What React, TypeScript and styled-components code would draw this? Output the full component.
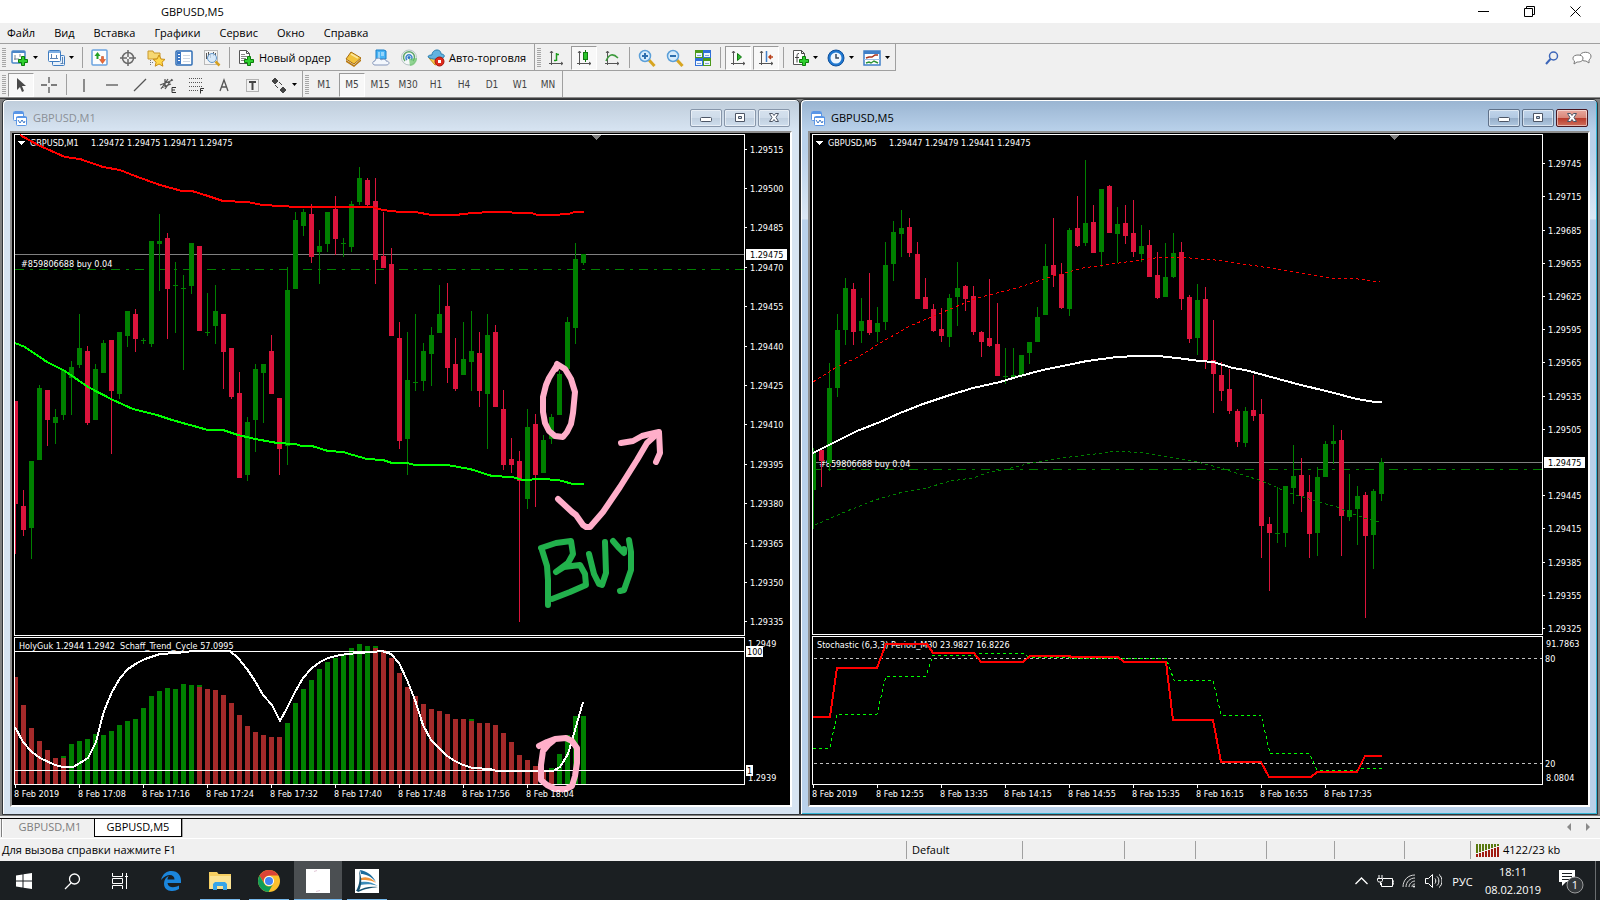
import React from "react";
import styled, { createGlobalStyle, css } from "styled-components";

const UI_FONT = '"Open Sans", "Noto Sans", sans-serif';
const CHART_FONT = '"DejaVu Sans Condensed", "DejaVu Sans", sans-serif';

const Global = createGlobalStyle`
  *, *::before, *::after { box-sizing: border-box; }
  body { margin: 0; background: #f0f0f0; font-family: ${UI_FONT}; font-size: 11px; color: #000; }
  button { font: inherit; color: inherit; margin: 0; padding: 0; border: 0; background: none; }
  svg { display: block; flex: none; }
`;

/* ---------- shell ---------- */

const Shell = styled.div`
  display: flex;
  flex-direction: column;
  min-height: 100vh;
  min-width: 1000px;
`;

const TitleBar = styled.header`
  display: flex;
  align-items: center;
  height: 23px;
  padding: 0 2px 0 161px;
  background: #fff;
  line-height: 16px;
`;

const CaptionButtons = styled.div`
  display: flex;
  margin-left: auto;
`;

const CaptionButton = styled.button`
  display: grid;
  place-items: center;
  width: 46px;
  height: 22px;
`;

const MenuBar = styled.nav`
  display: flex;
  align-items: center;
  gap: 19px;
  height: 21px;
  padding: 0 7px;
  border-bottom: 1px solid #a0a0a0;
`;

const MenuItem = styled.button`
  line-height: 18px;
`;

const Toolbars = styled.div`
  display: flex;
  justify-content: space-between;
  padding-right: 7px;
`;

const Strip = styled.div<{ $underlined?: boolean }>`
  display: flex;
  width: max-content;
  height: ${(p) => (p.$underlined ? 27 : 26)}px;
  ${(p) => p.$underlined && css`border-bottom: 1px solid #a0a0a0;`}
`;

const Section = styled.div`
  display: flex;
  align-items: center;
  padding-top: 1px;
  border-right: 1px solid #a0a0a0;
`;

const Grip = styled.span`
  width: 4px;
  height: 20px;
  margin: 0 1px 0 2px;
  background: repeating-linear-gradient(#a6a6a6 0 1px, #f0f0f0 1px 2px);
`;

const Rule = styled.span`
  width: 1px;
  height: 21px;
  margin: 0 3px;
  background: #a0a0a0;
`;

const ToolButton = styled.button<{ $pressed?: boolean; $menu?: boolean; $label?: boolean }>`
  display: flex;
  align-items: center;
  justify-content: ${(p) => (p.$menu || p.$label ? "flex-start" : "center")};
  gap: ${(p) => (p.$label ? 4 : 3)}px;
  width: ${(p) => (p.$label ? "auto" : p.$menu ? "34px" : "26px")};
  height: 24px;
  margin: 0 1px;
  padding: 0 ${(p) => (p.$label ? 6 : 0)}px 0 ${(p) => (p.$menu || p.$label ? 2 : 0)}px;
  line-height: 16px;
  white-space: nowrap;
  border: 1px solid transparent;
  ${(p) =>
    p.$pressed &&
    css`
      border-color: #9a9a9a #fff #fff #9a9a9a;
      background: #f8f8f8;
    `}
`;

const PeriodButton = styled(ToolButton)`
  font-family: ${CHART_FONT};
  font-size: 10px;
  color: #444;
`;

const Corner = styled.div`
  display: flex;
  align-items: center;
  gap: 8px;
  height: 27px;
`;

const PlainButton = styled.button`
  display: grid;
  place-items: center;
  width: 22px;
  height: 22px;
`;

/* ---------- documents ---------- */

const Documents = styled.main`
  display: flex;
  flex: 1;
  min-height: 718px;
  padding: 0 2px;
  border-top: 1px solid #8c8c8c;
  background: #808080;
  box-shadow: inset 0 1px 0 #3c3c3c, inset 0 -2px 0 #f0f0f0;
`;

const DocWindow = styled.section<{ $active?: boolean }>`
  display: flex;
  flex: 1 1 0;
  flex-direction: column;
  min-width: 0;
  margin: 1px 0 3px;
  padding: 0 7px 7px;
  border: 1px solid #303438;
  border-radius: 5px 5px 0 0;
  background: ${(p) =>
    p.$active
      ? "linear-gradient(#99b4d1 0, #b9d1ea 31px, #b9d1ea 50px, #dbe7f4 119px, #b9d1ea 120px)"
      : "linear-gradient(#bfcddb 0, #d7e4f2 31px)"};
  box-shadow: inset 1px 1px 0 #fff${(p) => (p.$active ? ", inset -1px -1px 0 #35b6d6" : "")};
`;

const DocTitle = styled.div<{ $active?: boolean }>`
  display: flex;
  align-items: center;
  gap: 6px;
  height: 31px;
  padding: 5px 0 0 3px;
  line-height: 16px;
  color: ${(p) => (p.$active ? "#000" : "#8a8f96")};
`;

const DocButtons = styled.div`
  display: flex;
  gap: 2px;
  margin: 0 2px 0 auto;
`;

const DocButton = styled.button<{ $tone: "idle" | "active" | "close" }>`
  display: grid;
  place-items: center;
  width: 32px;
  height: 18px;
  border: 1px solid ${(p) => (p.$tone === "close" ? "#4a1620" : p.$tone === "active" ? "#5f7189" : "#8796aa")};
  border-radius: 2px;
  box-shadow: inset 0 0 0 1px rgba(255, 255, 255, 0.5);
  background: ${(p) =>
    p.$tone === "close"
      ? "linear-gradient(#e9a99f 0, #d88678 49%, #b8392a 50%, #cf6f5c)"
      : p.$tone === "active"
        ? "linear-gradient(#c0d4ea 0, #b2c9e2 49%, #95adc8 50%, #b0c8e0)"
        : "linear-gradient(#d5e1ee 0, #cfdcea 49%, #c0cfdf 50%, #cfdeed)"};
`;

const ChartWell = styled.div`
  flex: 1;
  min-height: 0;
  overflow: hidden;
  border: 2px solid;
  border-color: #8e8e8e #fff #fff #8e8e8e;
  background: #000;
`;

const ChartCanvas = styled.svg`
  width: 100%;
  height: 672px;
  font-family: ${CHART_FONT};
  font-size: 9px;
`;

const Frame = styled.rect`
  width: calc(100% - 48px);
  fill: none;
  stroke: #fff;
  stroke-width: 1px;
`;

const Level = styled.rect`
  width: calc(100% - 49px);
  height: 1px;
`;

const Note = styled.text`
  fill: #fff;
  white-space: pre;
`;

/* ---------- bottom bars ---------- */

const TabStrip = styled.div`
  display: flex;
  align-items: flex-start;
  height: 21px;
  padding-left: 1px;
  border-top: 1px solid #000;
  border-bottom: 1px solid #fff;
`;

const Tab = styled.button<{ $active?: boolean }>`
  height: 18px;
  width: ${(p) => (p.$active ? 88 : 93)}px;
  padding: ${(p) => (p.$active ? "0 0 1px" : "0 0 2px 4px")};
  line-height: 14px;
  color: ${(p) => (p.$active ? "#000" : "#7d7d7d")};
  ${(p) =>
    p.$active
      ? css`
          background: #fff;
          border: 1px solid #000;
          border-top: 0;
          box-shadow: 1px 0 0 #a0a0a0;
        `
      : css`
          border-left: 1px solid #808080;
          box-shadow: inset 1px 0 0 #fff;
        `}
`;

const TabArrows = styled.div`
  display: flex;
  align-items: center;
  gap: 3px;
  height: 16px;
  margin: 0 4px 0 auto;
`;

const ArrowButton = styled.button`
  display: grid;
  place-items: center;
  width: 16px;
  height: 16px;
`;

const StatusBar = styled.footer`
  display: flex;
  align-items: center;
  height: 22px;
  line-height: 16px;
`;

const StatusCell = styled.span<{ $w?: number }>`
  display: flex;
  align-items: center;
  gap: 4px;
  height: 18px;
  ${(p) => (p.$w ? `width: ${p.$w}px;` : "flex: 1;")}
  padding-left: ${(p) => (p.$w ? 5 : 2)}px;
  ${(p) => p.$w && css`border-left: 1px solid #a0a0a0;`}
`;

const Taskbar = styled.div`
  display: flex;
  height: 40px;
  background: #1b1f22;
  color: #fff;
`;

const TaskGroup = styled.div<{ $gap?: number; $inset?: number }>`
  display: flex;
  gap: ${(p) => p.$gap ?? 0}px;
  margin-left: ${(p) => p.$inset ?? 0}px;
`;

const TaskButton = styled.button<{ $running?: boolean; $active?: boolean }>`
  display: grid;
  place-items: center;
  position: relative;
  width: 48px;
  height: 40px;
  background: ${(p) => (p.$active ? "#4b4f52" : "none")};
  ${(p) =>
    p.$running &&
    css`
      &::after {
        content: "";
        position: absolute;
        left: ${p.$active ? 0 : 4}px;
        right: ${p.$active ? 0 : 4}px;
        bottom: 0;
        height: 2px;
        background: #76b9ed;
      }
    `}
`;

const Tray = styled.div`
  display: flex;
  align-items: center;
  margin-left: auto;
`;

const TrayButton = styled.button<{ $w?: number }>`
  display: grid;
  place-items: center;
  width: ${(p) => p.$w ?? 24}px;
  height: 40px;
`;

const Clock = styled.button`
  width: 66px;
  height: 40px;
  line-height: 18px;
  text-align: center;
`;

const ShowDesktop = styled.button`
  width: 5px;
  height: 40px;
  border-left: 1px solid #6a6d6f;
`;

/* ---------- small drawings ---------- */

type Children = { children?: React.ReactNode };

const Pic = ({ w = 18, h = 18, children }: Children & { w?: number; h?: number }) => (
  <svg width={w} height={h} viewBox={`0 0 ${w} ${h}`} fill="none" aria-hidden="true">
    {children}
  </svg>
);

const Caret = () => (
  <Pic w={7} h={4}>
    <path d="M1 0h5L3.500 3z" fill="#000" />
  </Pic>
);

const Plus = ({ x, y }: { x: number; y: number }) => (
  <path
    transform={`translate(${x} ${y})`}
    d="M3.500.5h3v3h3v3h-3v3h-3v-3h-3v-3h3z"
    fill="#2fd02f"
    stroke="#0b7d0b"
  />
);

const NewChartIcon = () => (
  <Pic>
    <rect x="1" y="2" width="13" height="12" rx="1" fill="#fff" stroke="#4a86c8" strokeWidth="1.500" />
    <path d="M1 3h13" stroke="#4a86c8" strokeWidth="2" />
    <path d="M4 6v5M3 10h5M9 5v3" stroke="#7d8894" />
    <Plus x={7} y={7} />
  </Pic>
);

const ProfilesIcon = () => (
  <Pic>
    <rect x="5.500" y="6.500" width="12" height="10" rx="1" fill="#e8f1fb" stroke="#3f7cc0" />
    <rect x="1.500" y="1.500" width="12" height="11" rx="1" fill="#fff" stroke="#3f7cc0" />
    <path d="M2 3h11" stroke="#7fb0e4" strokeWidth="2" />
    <path d="M4.500 5v5M3 9.500h8M9.500 6v3M13.500 14.500h3M15.500 8v6" stroke="#5b84b4" />
  </Pic>
);

const MarketWatchIcon = () => (
  <Pic>
    <rect x="1" y="1" width="15" height="15" rx="1" fill="#fdfdfd" stroke="#6aa3df" strokeWidth="1.500" />
    <path d="M6.500 3l3 4h-2v3h-2V7h-2z" fill="#26a226" />
    <path d="M11.500 14.500l-3-4h2V7.500h2v3h2z" fill="#ec6a38" stroke="#b43c12" strokeWidth=".5" />
  </Pic>
);

const CrosshairIcon = () => (
  <Pic>
    <circle cx="9" cy="9" r="5.500" stroke="#6a6a6a" strokeWidth="1.500" />
    <path d="M9 1v7M9 10v7M1 9h7M10 9h7" stroke="#6a6a6a" strokeWidth="1.500" />
  </Pic>
);

const NavigatorIcon = () => (
  <Pic>
    <path d="M1 2h5l1 2h6v6H1z" fill="#f7d872" stroke="#c9982c" />
    <path d="M3.500 11v6M3 13.500h3" stroke="#777" strokeDasharray="1 1" />
    <path d="M12 6l2 4 4 .4-3 2.800.9 4L12 15l-3.800 2.200.9-4-3-2.800 4-.4z" fill="#ffd84a" stroke="#c98d14" />
  </Pic>
);

const TerminalIcon = () => (
  <Pic>
    <rect x="1" y="2" width="16" height="14" rx="1" fill="#fff" stroke="#2f6db5" strokeWidth="1.500" />
    <rect x="2" y="3" width="4" height="12" fill="#3b77c4" />
    <path d="M8 6.500h7M8 9.500h7M8 12.500h7" stroke="#cfd8e4" />
    <path d="M3 5.500h2M3 8.500h2M3 11.500h2" stroke="#fff" />
  </Pic>
);

const TesterIcon = () => (
  <Pic>
    <rect x="1.500" y="1.500" width="13" height="14" fill="#f4f4f4" stroke="#b9b9b9" />
    <path d="M3.500 4v6M5.500 3v5M7.500 5v4M10.500 3v4M12.500 4v3" stroke="#555" />
    <circle cx="9" cy="9" r="4.500" fill="#cfe6fb" fillOpacity=".8" stroke="#6598cb" />
    <path d="M12.500 12.500l4 4" stroke="#d5a021" strokeWidth="2.500" />
  </Pic>
);

const NewOrderIcon = () => (
  <Pic>
    <path d="M2.500 1.500h7l3 3v10h-10z" fill="#fff" stroke="#555" />
    <path d="M9.500 1.500v3h3" stroke="#555" />
    <path d="M4 5.500h4M4 7.500h6M4 9.500h5M4 11.500h4" stroke="#888" />
    <Plus x={7} y={7} />
  </Pic>
);

const BookIcon = () => (
  <Pic>
    <path d="M2 11l8 5 7-6v2l-7 6-8-5z" fill="#b87912" />
    <path d="M7 3l10 6-7 6-8-5z" fill="#f2c23c" stroke="#a86d10" />
    <path d="M7 5l7 4" stroke="#fbe79a" strokeWidth="2" />
  </Pic>
);

const VpsIcon = () => (
  <Pic>
    <path d="M4 1h8l2 1v8H4z" fill="#48b4f5" stroke="#1a7ec7" />
    <path d="M7 3v7M9 4h3M9 6h3" stroke="#e2f5ff" />
    <path d="M3 16c-3 0-3-4 0-4 0-3 5-4 6-1 3-2 5 0 5 1 4 0 4 4 0 4z" fill="#f3f7fd" stroke="#8496bb" />
  </Pic>
);

const SignalsIcon = () => (
  <Pic>
    <circle cx="9" cy="8.500" r="7.500" fill="#f5f7f8" stroke="#b4c4c4" />
    <path d="M5 12a5.500 5.500 0 1 1 8 0" stroke="#5da568" strokeWidth="1.500" />
    <path d="M7 11a3 3 0 1 1 4 0" stroke="#3d86cf" strokeWidth="1.500" />
    <circle cx="9" cy="8.500" r="1.500" fill="#2d72c4" />
    <path d="M9 10l1 7c4 0 7-4 7-8" fill="#66c466" fillOpacity=".7" />
  </Pic>
);

const AutoIcon = () => (
  <Pic>
    <path d="M2 9l6 7 7-3V8z" fill="#f7c948" stroke="#c7911b" />
    <path d="M1 8c0-2 3-2 4-2 0-6 9-7 9-1 2 0 4 1 3 3-4 3-12 3-16 0z" fill="#62b3e0" stroke="#2b7eae" />
    <circle cx="12.500" cy="12.500" r="4.500" fill="#df2a1c" stroke="#a51409" />
    <rect x="11" y="11" width="3" height="3" fill="#fff" />
  </Pic>
);

const Axes = ({ children }: Children) => (
  <Pic>
    <path d="M4.500 2v14M2 14.500h14M3 4l1.500-2L6 4M14 13l2 1.500-2 1.500" stroke="#555" />
    {children}
  </Pic>
);

const ZoomIcon = ({ plus }: { plus?: boolean }) => (
  <Pic>
    <path d="M11 11l5.500 6" stroke="#d7a520" strokeWidth="3" />
    <circle cx="7" cy="7" r="5.500" fill="#d6ecfc" stroke="#5b9fd8" strokeWidth="1.500" />
    <path d={plus ? "M4 7h6M7 4v6" : "M4 7h6"} stroke="#2d6fae" strokeWidth="2" />
  </Pic>
);

const TileIcon = () => (
  <Pic>
    <path d="M1 1h8v8H1zM9 9h8v8H9z" fill="#4c9a1c" />
    <path d="M9 1h8v8H9zM1 9h8v8H1z" fill="#2f6fd8" />
    <path d="M2 4h6v4H2zM10 4h6v4h-6zM2 12h6v4H2zM10 12h6v4h-6z" fill="#eef6ff" />
    <path d="M3 6.500h4M11 6.500h4M3 14.500h4M11 14.500h4" stroke="#86a5cf" />
  </Pic>
);

const IndicatorsIcon = () => (
  <Pic>
    <path d="M2.500 1.500h8l3 3v11h-11z" fill="#fff" stroke="#555" />
    <path d="M10.500 1.500v3h3M8 4.500c-2 0-2 1-2 3v6M4 8.500h4" stroke="#444" />
    <Plus x={8} y={7} />
  </Pic>
);

const ClockIcon = () => (
  <Pic>
    <circle cx="9" cy="9" r="8" fill="#1f78d1" stroke="#0f4f9a" />
    <circle cx="9" cy="9" r="5.500" fill="#eef6fe" />
    <path d="M9 5v4h3" stroke="#3a4a5c" strokeWidth="1.500" />
  </Pic>
);

const TemplateIcon = () => (
  <Pic>
    <rect x="1" y="2" width="16" height="14" fill="#fff" stroke="#3f7fc8" strokeWidth="1.500" />
    <path d="M1 3.500h16" stroke="#3f7fc8" strokeWidth="3" />
    <path d="M3 9l3-1 3 0 3-2 3 0" stroke="#a8321c" strokeWidth="1.500" />
    <path d="M1 10.500h16" stroke="#9dbfe6" />
    <path d="M3 14l3-1 2 1 3-2 4 2" stroke="#2f9437" strokeWidth="1.500" />
  </Pic>
);

const Grey = ({ d, children }: Children & { d: string }) => (
  <Pic>
    <path d={d} stroke="#555" strokeWidth="1.300" />
    {children}
  </Pic>
);

const DocIcon = () => (
  <Pic w={14} h={15}>
    <rect x=".5" y=".5" width="10" height="9" rx="1" fill="#fff" stroke="#5a96e6" />
    <path d="M1 2h9" stroke="#5a96e6" strokeWidth="2" />
    <rect x="3.500" y="5.500" width="10" height="9" rx="1" fill="#fff" stroke="#5a96e6" />
    <path d="M3 6.500h11" stroke="#5a96e6" />
    <path d="M5 9l2 3 2-3 2 3 1-2" stroke="#3c78c8" />
  </Pic>
);

const glyphFill = "#fff";
const glyphLine = "#4d5666";

const DocMinIcon = () => (
  <Pic w={12} h={12}>
    <rect x=".5" y="5.500" width="11" height="4" rx="1" fill={glyphFill} stroke={glyphLine} />
  </Pic>
);
const DocMaxIcon = () => (
  <Pic w={12} h={10}>
    <path fillRule="evenodd" d="M1.500.5h9v8h-9zM4.500 3.500h3v2h-3z" fill={glyphFill} stroke={glyphLine} />
  </Pic>
);
const DocCloseIcon = () => (
  <Pic w={12} h={10}>
    <path d="M1.500.5h3L6 2.500 7.500.5h3L8 4.500l2.500 4h-3L6 6.500l-1.500 2h-3L4 4.500z" fill={glyphFill} stroke={glyphLine} />
  </Pic>
);

/* ---------- chart data ---------- */

// high, body top, body bottom, low, rising (1) or falling (0)
type Candle = [number, number, number, number, 0 | 1];
type Point = [number, number];

const m1Candles: Candle[] = [
  [401, 401, 504, 554, 0], [490, 506, 530, 536, 0], [461, 461, 528, 559, 1], [385, 388, 460, 460, 1],
  [390, 390, 420, 446, 0], [409, 417, 423, 444, 1], [370, 370, 415, 420, 1], [361, 367, 378, 415, 1],
  [314, 348, 365, 368, 1], [346, 351, 423, 425, 0], [364, 369, 420, 420, 1], [340, 343, 373, 373, 1],
  [340, 340, 391, 454, 0], [332, 332, 394, 399, 1], [311, 311, 336, 347, 1], [309, 314, 339, 352, 0],
  [338, 340, 341, 344, 1], [241, 241, 344, 347, 1], [214, 241, 244, 291, 1], [233, 238, 289, 339, 0],
  [262, 285, 286, 333, 1], [275, 288, 289, 370, 1], [243, 243, 286, 294, 1], [246, 246, 331, 331, 0],
  [293, 332, 333, 336, 1], [285, 311, 326, 344, 1], [314, 314, 352, 389, 0], [348, 348, 397, 399, 0],
  [372, 393, 478, 478, 0], [417, 422, 475, 481, 1], [364, 369, 420, 452, 1], [364, 364, 373, 423, 1],
  [335, 351, 394, 394, 0], [398, 398, 449, 475, 0], [267, 290, 446, 465, 1], [212, 220, 289, 289, 1],
  [209, 212, 226, 236, 1], [204, 214, 257, 263, 0], [230, 246, 252, 284, 1], [212, 212, 244, 252, 1],
  [196, 209, 239, 255, 0], [238, 243, 244, 257, 1], [201, 204, 247, 252, 1], [167, 178, 202, 205, 1],
  [178, 180, 205, 206, 0], [178, 201, 260, 284, 0], [212, 256, 268, 268, 0], [248, 264, 336, 336, 0],
  [322, 338, 441, 449, 0], [332, 380, 439, 475, 1], [314, 382, 383, 391, 1], [343, 351, 381, 391, 1],
  [327, 335, 354, 386, 1], [285, 314, 333, 333, 1], [283, 306, 368, 383, 0], [338, 364, 389, 391, 0],
  [322, 359, 375, 375, 1], [311, 351, 362, 391, 1], [332, 353, 391, 407, 0], [314, 335, 394, 449, 1],
  [325, 332, 407, 407, 0], [390, 409, 465, 470, 0], [438, 459, 465, 473, 0], [451, 461, 481, 622, 0],
  [409, 427, 499, 509, 1], [414, 424, 475, 507, 0], [435, 440, 473, 473, 1], [414, 417, 439, 444, 1],
  [371, 374, 415, 415, 1], [317, 322, 369, 378, 1], [243, 259, 328, 344, 1], [254, 254, 263, 265, 1],
];

const m5Candles: Candle[] = [
  [448, 453, 490, 529, 1], [450, 450, 461, 487, 0], [363, 388, 463, 471, 1], [314, 330, 388, 397, 1],
  [278, 288, 330, 345, 1], [283, 289, 332, 345, 0], [298, 321, 331, 343, 1], [273, 320, 333, 335, 0],
  [307, 323, 332, 342, 1], [242, 265, 322, 330, 1], [221, 232, 264, 281, 1], [210, 228, 234, 257, 1],
  [218, 227, 253, 257, 0], [242, 254, 299, 299, 0], [278, 297, 309, 309, 0], [304, 309, 331, 332, 0],
  [308, 329, 336, 342, 0], [294, 298, 337, 347, 1], [262, 288, 297, 326, 1], [285, 286, 299, 311, 0],
  [286, 296, 332, 335, 0], [331, 332, 342, 357, 0], [279, 338, 346, 347, 0], [303, 344, 376, 376, 0],
  [348, 376, 377, 384, 1], [348, 375, 377, 377, 1], [355, 355, 376, 378, 1], [342, 342, 353, 364, 1],
  [307, 317, 342, 342, 1], [244, 266, 315, 315, 1], [218, 265, 275, 287, 0], [263, 274, 308, 309, 0],
  [228, 230, 309, 316, 1], [196, 228, 246, 247, 0], [160, 223, 243, 246, 1], [205, 222, 253, 253, 0],
  [189, 189, 252, 267, 1], [185, 186, 233, 233, 0], [207, 224, 234, 263, 1], [205, 223, 236, 244, 0],
  [200, 233, 252, 257, 0], [225, 246, 254, 262, 1], [230, 245, 277, 277, 0], [252, 275, 298, 299, 0],
  [243, 277, 297, 297, 1], [233, 253, 277, 278, 1], [242, 252, 299, 310, 0], [295, 297, 339, 343, 0],
  [284, 300, 338, 355, 1], [287, 299, 360, 369, 0], [320, 360, 374, 413, 0], [362, 375, 391, 401, 0],
  [369, 389, 411, 414, 0], [409, 411, 442, 447, 0], [407, 411, 443, 447, 1], [375, 410, 416, 421, 0],
  [399, 414, 526, 558, 0], [517, 524, 533, 591, 0], [487, 533, 534, 543, 1], [486, 486, 533, 547, 1],
  [445, 476, 488, 504, 1], [458, 475, 496, 512, 0], [475, 492, 534, 558, 0], [467, 477, 533, 556, 1],
  [441, 444, 477, 477, 1], [425, 441, 444, 464, 1], [430, 440, 516, 556, 0], [474, 510, 517, 521, 1],
  [486, 496, 509, 545, 1], [492, 495, 536, 618, 0], [489, 491, 535, 569, 1], [458, 462, 494, 501, 1],
];

// bar top, rising (1) or falling (0), height of a rising cap on a falling bar
const histogram: [number, 0 | 1, number?][] = [
  [677, 0], [705, 0], [728, 0], [741, 0], [750, 0], [758, 0], [756, 0, 2], [744, 1], [741, 1], [739, 1],
  [734, 1], [735, 1], [731, 1], [725, 1], [721, 1], [719, 1], [708, 1], [696, 1], [691, 1], [688, 1],
  [689, 1], [684, 1], [685, 1], [685, 0, 2], [689, 0], [690, 0], [695, 0], [703, 0], [715, 0], [726, 0],
  [732, 0], [735, 0], [737, 0], [737, 0], [723, 1], [703, 1], [689, 1], [680, 1], [669, 1], [662, 1],
  [658, 1], [654, 1], [648, 1], [644, 1], [646, 1], [646, 0, 2], [650, 0], [658, 0], [673, 0], [687, 0],
  [696, 0], [704, 0], [709, 0], [711, 0], [714, 0], [719, 0], [719, 0], [719, 0, 2], [723, 0], [723, 0],
  [725, 0], [733, 0], [742, 0], [755, 0], [760, 0], [766, 0], [770, 0], [768, 0, 4], [754, 1], [735, 1],
  [716, 1], [716, 1],
];

const m1Red: Point[] = [[20, 135], [38, 145], [65, 157], [80, 159], [103, 167], [120, 170], [135, 176], [160, 185], [182, 191], [192, 191], [208, 196], [223, 201], [247, 202], [263, 205], [297, 207], [343, 207], [372, 207], [383, 210], [400, 212], [415, 212], [432, 215], [455, 215], [473, 213], [492, 212], [532, 213], [537, 215], [552, 215], [568, 214], [575, 212], [584, 212]];
const m1Green: Point[] = [[15, 343], [25, 347], [47, 362], [65, 371], [88, 387], [113, 400], [133, 409], [157, 415], [172, 420], [190, 425], [208, 430], [223, 430], [238, 435], [255, 439], [272, 442], [277, 443], [295, 444], [302, 446], [312, 446], [328, 451], [343, 452], [353, 455], [367, 459], [383, 460], [392, 463], [407, 463], [415, 465], [447, 465], [470, 469], [492, 476], [512, 477], [523, 480], [542, 479], [558, 480], [573, 484], [584, 484]];
const schaff: Point[] = [[15, 727], [23, 742], [32, 752], [40, 758], [55, 765], [63, 767], [73, 767], [80, 763], [88, 758], [96, 742], [100, 726], [104, 711], [112, 692], [120, 678], [128, 669], [137, 663], [145, 659], [160, 654], [177, 653], [193, 651], [230, 651], [238, 658], [247, 669], [255, 681], [263, 695], [272, 705], [280, 721], [287, 708], [295, 692], [303, 678], [312, 668], [320, 662], [328, 658], [340, 655], [357, 653], [373, 652], [382, 651], [391, 654], [399, 663], [407, 680], [415, 700], [423, 725], [431, 740], [447, 756], [455, 761], [463, 765], [473, 768], [490, 769], [497, 771], [553, 771], [560, 767], [568, 754], [575, 730], [583, 702]];
const m5Red: Point[] = [[813, 382], [835, 368], [858, 357], [882, 342], [910, 326], [943, 312], [977, 298], [1017, 288], [1050, 277], [1083, 268], [1133, 261], [1163, 257], [1180, 257], [1200, 259], [1215, 260], [1257, 266], [1307, 274], [1337, 279], [1350, 278], [1380, 282]];
const m5White: Point[] = [[813, 453], [833, 443], [857, 431], [880, 422], [900, 413], [923, 404], [950, 395], [973, 388], [1000, 382], [1020, 376], [1043, 370], [1087, 361], [1117, 357], [1137, 356], [1158, 356], [1177, 358], [1200, 361], [1213, 362], [1233, 368], [1245, 370], [1260, 374], [1297, 384], [1330, 392], [1357, 399], [1375, 402], [1382, 402]];
const m5Green: Point[] = [[815, 525], [847, 511], [875, 500], [903, 492], [923, 489], [950, 481], [973, 478], [987, 473], [1007, 469], [1027, 464], [1060, 458], [1080, 456], [1117, 451], [1143, 453], [1157, 455], [1173, 458], [1197, 462], [1217, 467], [1230, 471], [1262, 481], [1287, 492], [1312, 500], [1337, 507], [1353, 514], [1367, 519], [1380, 522]];
const stochMain: Point[] = [[813, 717], [830, 717], [837, 668], [877, 668], [886, 644], [927, 644], [933, 653], [974, 653], [981, 662], [1023, 662], [1030, 656], [1069, 656], [1072, 657], [1118, 657], [1124, 662], [1166, 662], [1173, 720], [1213, 720], [1221, 762], [1261, 762], [1269, 777], [1311, 777], [1317, 772], [1357, 772], [1365, 756], [1382, 756]];
const stochSignal: Point[] = [[813, 748], [830, 748], [837, 714], [877, 714], [886, 676], [926, 676], [933, 655], [977, 655], [979, 653], [1023, 653], [1028, 657], [1070, 658], [1166, 658], [1174, 680], [1213, 680], [1221, 715], [1261, 715], [1270, 753], [1309, 753], [1317, 770], [1357, 770], [1363, 768], [1382, 768]];

const m1Prices: [number, string][] = [[149, "1.29515"], [188, "1.29500"], [227, "1.29485"], [267, "1.29470"], [306, "1.29455"], [346, "1.29440"], [385, "1.29425"], [424, "1.29410"], [464, "1.29395"], [503, "1.29380"], [543, "1.29365"], [582, "1.29350"], [621, "1.29335"]];
const m5Prices: [number, string][] = [[163, "1.29745"], [196, "1.29715"], [230, "1.29685"], [263, "1.29655"], [296, "1.29625"], [329, "1.29595"], [362, "1.29565"], [396, "1.29535"], [429, "1.29505"], [495, "1.29445"], [528, "1.29415"], [562, "1.29385"], [595, "1.29355"], [628, "1.29325"]];

const m1Times = ["8 Feb 2019", "8 Feb 17:08", "8 Feb 17:16", "8 Feb 17:24", "8 Feb 17:32", "8 Feb 17:40", "8 Feb 17:48", "8 Feb 17:56", "8 Feb 18:04"];
const m5Times = ["8 Feb 2019", "8 Feb 12:55", "8 Feb 13:35", "8 Feb 14:15", "8 Feb 14:55", "8 Feb 15:35", "8 Feb 16:15", "8 Feb 16:55", "8 Feb 17:35"];

const line = (points: Point[]) => points.map((p) => p.join(",")).join(" ");

const GREEN = "#008000";
const CRIMSON = "#dc143c";
const BROWN = "#a52a2a";
const TOP = 133;

/* ---------- chart parts ---------- */

const Candles = ({ data, start }: { data: Candle[]; start: number }) => (
  <g>
    {data.map(([high, top, bottom, low, up], i) => {
      const x = start + i * 8;
      const left = i === 0 ? x : x - 2;
      return (
        <g key={i} fill={up ? GREEN : CRIMSON}>
          <rect x={x} y={high} width="1" height={low - high} />
          <rect x={left} y={top} width={i === 0 ? 3 : 5} height={bottom - top} />
        </g>
      );
    })}
  </g>
);

const Histogram = ({ start }: { start: number }) => (
  <g>
    {histogram.map(([top, up, cap = 0], i) => {
      const x = i === 0 ? start : start - 2 + i * 8;
      const width = i === 0 ? 3 : 5;
      return (
        <g key={i}>
          <rect x={x} y={top + cap} width={width} height={784 - top - cap} fill={up ? GREEN : BROWN} />
          {cap > 0 && <rect x={x} y={top} width={width} height={cap} fill={GREEN} />}
        </g>
      );
    })}
  </g>
);

const TimeScale = ({ labels, start }: { labels: string[]; start: number }) => (
  <g>
    {labels.map((label, i) => (
      <g key={label}>
        <rect x={start + i * 64} y="785" width="1" height="3" fill="#fff" />
        <Note x={start + i * 64 - 1} y="797">{label}</Note>
      </g>
    ))}
  </g>
);

const Curve = ({ points, color, dash, wide }: { points: Point[]; color: string; dash?: string; wide?: boolean }) => (
  <polyline points={line(points)} stroke={color} strokeWidth={wide ? 2 : 1} strokeDasharray={dash} fill="none" />
);

type ChartProps = Children & {
  left: number;
  split: number;
  title: string;
  quotes: string;
  prices: [number, string][];
  priceY: number;
  orderY: number;
  orderTextY: number;
  subTitle: string;
  times: string[];
  scale: React.ReactNode;
};

const Chart = (p: ChartProps) => (
  <ChartCanvas role="img" aria-label={p.title} shapeRendering="crispEdges">
    <Frame x="2" y="1" height={p.split - TOP - 1} transform="translate(.5 .5)" />
    <Frame x="2" y={p.split - TOP + 2} height={784 - p.split - 2} transform="translate(.5 .5)" />
    <g transform={`translate(${-p.left} ${-TOP})`}>
      <Level x={p.left + 3} y={p.priceY} fill="#808080" />
      <line x1={p.left + 3} x2={p.left + 732} y1={p.orderY} y2={p.orderY} transform="translate(0 .5)" stroke={GREEN} strokeDasharray="9 6 3 6" />
      <path d="M6 141h7l-3.500 4z" transform={`translate(${p.left} 0)`} fill="#fff" />
      <Note x={p.left + 18} y="146">{p.title}</Note>
      <Note x={p.left + 79} y="146">{p.quotes}</Note>
      <Note x={p.left + 9} y={p.orderTextY}>#859806688 buy 0.04</Note>
      <Note x={p.left + 7} y={p.split + 14}>{p.subTitle}</Note>
      <path d="M0 135h9l-4.500 5z" transform={`translate(${p.left + 580} 0)`} fill="#808080" />
      {p.children}
      <TimeScale labels={p.times} start={p.left + 3} />
    </g>
    <svg x="100%" y={-TOP} overflow="visible">
      {p.prices.map(([y, text]) => (
        <g key={text}>
          <rect x="-46" y={y} width="3" height="1" fill="#fff" />
          <Note x="-40" y={y + 4}>{text}</Note>
        </g>
      ))}
      <rect x="-44" y={p.priceY - 5} width="41" height="11" fill="#fff" />
      <text x="-40" y={p.priceY + 4} fill="#000">1.29475</text>
      {p.scale}
    </svg>
  </ChartCanvas>
);

const Ink = () => (
  <g fill="none" strokeWidth="6" strokeLinecap="round" strokeLinejoin="round" shapeRendering="auto">
    <g stroke="#ffaec9">
      <path d="M557 365 549 378 546 385 543 397 543 412 545 423 549 431 555 436 563 437 567 432 571 424 573 413 575 392 571 379 565 369 557 364 556 369" />
      <path d="M558 499 572 512 576 515 583 525 586 527 590 527 603 512 620 487 637 460 647 443 658 433" />
      <path d="M621 443 633 441 642 436 650 434 659 432 660 453 656 462" />
      <path d="M539 746 547 742 555 739 566 738 572 741 577 748 577 763 575 776 572 786 566 789 555 789 547 785 541 780 541 765 543 751 548 745 553 741" />
    </g>
    <g stroke="#22b14c">
      <path d="M541 548 556 543 571 541 573 554 568 563 556 572 564 567 580 565 585 574 586 585 570 592 552 599" />
      <path d="M542 550 547 566 548 580 548 605" />
      <path d="M589 554 594 574 599 584 602 585 606 573 605 542" />
      <path d="M613 541 619 548 624 553 624 549" />
      <path d="M629 540 631 552 631 570 624 590 620 591" />
    </g>
  </g>
);

const M1Chart = () => (
  <Chart
    left={12}
    split={635}
    title="GBPUSD,M1"
    quotes="1.29472 1.29475 1.29471 1.29475"
    prices={m1Prices}
    priceY={254}
    orderY={269}
    orderTextY={267}
    subTitle="HolyGuk 1.2944 1.2942  Schaff_Trend_Cycle 57.0995"
    times={m1Times}
    scale={
      <g>
        <Note x="-42" y="647">1.2949</Note>
        <Note x="-42" y="781">1.2939</Note>
        <rect x="-44" y="646" width="17" height="11" fill="#fff" />
        <text x="-43" y="655" fill="#000">100</text>
        <rect x="-44" y="765" width="7" height="11" fill="#fff" />
        <text x="-43" y="774" fill="#000">1</text>
      </g>
    }
  >
    <Candles data={m1Candles} start={15} />
    <Curve points={m1Red} color="#f00" wide />
    <Curve points={m1Green} color="#0f0" wide />
    <Histogram start={15} />
    <Level x={15} y={651} fill="#fff" />
    <Level x={15} y={770} fill="#fff" />
    <Curve points={schaff} color="#fff" wide />
    <Ink />
  </Chart>
);

const M5Chart = () => (
  <Chart
    left={810}
    split={634}
    title="GBPUSD,M5"
    quotes="1.29447 1.29479 1.29441 1.29475"
    prices={m5Prices}
    priceY={462}
    orderY={469}
    orderTextY={467}
    subTitle="Stochastic (6,3,3) Period_M30 23.9827 16.8226"
    times={m5Times}
    scale={
      <g>
        <Note x="-42" y="647">91.7863</Note>
        <Note x="-43" y="662">80</Note>
        <Note x="-43" y="767">20</Note>
        <Note x="-42" y="781">8.0804</Note>
      </g>
    }
  >
    <Curve points={[[814, 658], [1542, 658]]} color="#c0c0c0" dash="3 3" />
    <Curve points={[[814, 763], [1542, 763]]} color="#c0c0c0" dash="3 3" />
    <Candles data={m5Candles} start={813} />
    <Curve points={m5Red} color="#f00" dash="3 3" />
    <Curve points={m5Green} color={GREEN} dash="3 3" />
    <Curve points={m5White} color="#fff" wide />
    <Curve points={stochSignal} color="#0f0" dash="3 3" />
    <Curve points={stochMain} color="#f00" wide />
  </Chart>
);

const ChartWindow = ({ title, active, children }: Children & { title: string; active?: boolean }) => (
  <DocWindow $active={active} aria-label={title}>
    <DocTitle $active={active}>
      <DocIcon />
      {title}
      <DocButtons>
        <DocButton $tone={active ? "active" : "idle"} aria-label="Свернуть"><DocMinIcon /></DocButton>
        <DocButton $tone={active ? "active" : "idle"} aria-label="Развернуть"><DocMaxIcon /></DocButton>
        <DocButton $tone={active ? "close" : "idle"} aria-label="Закрыть"><DocCloseIcon /></DocButton>
      </DocButtons>
    </DocTitle>
    <ChartWell>{children}</ChartWell>
  </DocWindow>
);

/* ---------- page ---------- */

const menus = ["Файл", "Вид", "Вставка", "Графики", "Сервис", "Окно", "Справка"];
const periods = ["M1", "M5", "M15", "M30", "H1", "H4", "D1", "W1", "MN"];

const MainStrip = () => (
  <Strip $underlined>
    <Section>
      <Grip />
      <ToolButton $menu aria-label="Новый график"><NewChartIcon /><Caret /></ToolButton>
      <ToolButton $menu aria-label="Профили"><ProfilesIcon /><Caret /></ToolButton>
      <Rule />
      <ToolButton aria-label="Обзор рынка"><MarketWatchIcon /></ToolButton>
      <ToolButton aria-label="Окно данных"><CrosshairIcon /></ToolButton>
      <ToolButton aria-label="Навигатор"><NavigatorIcon /></ToolButton>
      <ToolButton aria-label="Терминал"><TerminalIcon /></ToolButton>
      <ToolButton aria-label="Тестер стратегий"><TesterIcon /></ToolButton>
      <Rule />
      <ToolButton $label><NewOrderIcon />Новый ордер</ToolButton>
      <ToolButton aria-label="Редактор"><BookIcon /></ToolButton>
      <ToolButton aria-label="Виртуальный хостинг"><VpsIcon /></ToolButton>
      <ToolButton aria-label="Сигналы"><SignalsIcon /></ToolButton>
      <ToolButton $label><AutoIcon />Авто-торговля</ToolButton>
    </Section>
    <Section>
      <Grip />
      <ToolButton aria-label="Бары"><Axes><path d="M9.500 4v8M7 11.500h2M10 5.500h2" stroke="#1c9a1c" strokeWidth="1.500" /></Axes></ToolButton>
      <ToolButton $pressed aria-label="Свечи"><Axes><path d="M10.500 1v12" stroke="#0f7a0f" /><rect x="8.500" y="3.500" width="4" height="7" fill="#29c429" stroke="#0f7a0f" /></Axes></ToolButton>
      <ToolButton aria-label="Линия"><Axes><path d="M3 12c3-7 7-8 12-3" stroke="#3d9a3d" strokeWidth="1.500" /></Axes></ToolButton>
      <Rule />
      <ToolButton aria-label="Увеличить"><ZoomIcon plus /></ToolButton>
      <ToolButton aria-label="Уменьшить"><ZoomIcon /></ToolButton>
      <ToolButton aria-label="Окна мозаикой"><TileIcon /></ToolButton>
      <Rule />
      <ToolButton $pressed aria-label="Автопрокрутка"><Axes><path d="M8.500 4.500l4 3.500-4 3.500z" fill="#2eb82e" stroke="#107510" /></Axes></ToolButton>
      <ToolButton $pressed aria-label="Сдвиг графика"><Axes><path d="M9.500 2v11" stroke="#3f7fc8" strokeWidth="1.500" /><path d="M16 8h-4M14 6l-2 2 2 2" stroke="#b8401a" strokeWidth="1.500" /></Axes></ToolButton>
      <Rule />
      <ToolButton $menu aria-label="Индикаторы"><IndicatorsIcon /><Caret /></ToolButton>
      <ToolButton $menu aria-label="Периоды"><ClockIcon /><Caret /></ToolButton>
      <ToolButton $menu aria-label="Шаблоны"><TemplateIcon /><Caret /></ToolButton>
    </Section>
  </Strip>
);

const DrawStrip = () => (
  <Strip>
    <Section>
      <Grip />
      <ToolButton $pressed aria-label="Курсор"><Pic><path d="M5 2v12l3-3 2 5 2-1-2-5h4z" fill="#4a4a4a" /></Pic></ToolButton>
      <ToolButton aria-label="Перекрестие"><Grey d="M9 1v6M9 11v6M1 9h6M11 9h6" /></ToolButton>
      <Rule />
      <ToolButton aria-label="Вертикальная линия"><Grey d="M9 3v13" /></ToolButton>
      <ToolButton aria-label="Горизонтальная линия"><Grey d="M3 9h12" /></ToolButton>
      <ToolButton aria-label="Трендовая линия"><Grey d="M3 15L15 3" /></ToolButton>
      <ToolButton aria-label="Канал"><Grey d="M2 13l7-10M6 13l7-10M1 9l13-5M2 12l10-4M6 3v8"><path d="M17 11.500h-4v5h4M13 14h3" stroke="#333" /></Grey></ToolButton>
      <ToolButton aria-label="Фибоначчи"><Pic><path d="M2 2.500h14M2 6.500h14M2 10.500h14M2 14.500h9" stroke="#555" strokeDasharray="1 1" /><path d="M17 12.500h-3.500v5M13 14.500h3" stroke="#333" /></Pic></ToolButton>
      <ToolButton aria-label="Текст"><Grey d="M5 15L9 4l4 11M6 11h6" /></ToolButton>
      <ToolButton aria-label="Метка"><Pic><rect x="3.500" y="3.500" width="12" height="12" stroke="#777" strokeDasharray="1 1" /><path d="M6 6h7M9.500 6v8" stroke="#444" strokeWidth="2" /></Pic></ToolButton>
      <ToolButton $menu aria-label="Стрелки"><Pic><path d="M5 2l3 3-3 3-3-3zM13 11l3 3-3 3-3-3zM5 9l3 3M9 6l3 3" fill="#444" stroke="#444" /></Pic><Caret /></ToolButton>
    </Section>
    <Section>
      <Grip />
      {periods.map((p) => (
        <PeriodButton key={p} $pressed={p === "M5"}>{p}</PeriodButton>
      ))}
    </Section>
  </Strip>
);

const App = () => (
  <Shell>
    <Global />
    <TitleBar>
      GBPUSD,M5
      <CaptionButtons>
        <CaptionButton aria-label="Свернуть окно"><Pic w={11} h={11}><path d="M0 5.500h11" stroke="#000" /></Pic></CaptionButton>
        <CaptionButton aria-label="Восстановить окно"><Pic w={11} h={11}><path d="M.5 2.500h8v8h-8zM2.500 2.500v-2h8v8h-2" stroke="#000" /></Pic></CaptionButton>
        <CaptionButton aria-label="Закрыть окно"><Pic w={11} h={11}><path d="M.5.5l10 10M10.500.5l-10 10" stroke="#000" /></Pic></CaptionButton>
      </CaptionButtons>
    </TitleBar>
    <MenuBar>
      {menus.map((m) => <MenuItem key={m}>{m}</MenuItem>)}
    </MenuBar>
    <Toolbars>
      <div>
        <MainStrip />
        <DrawStrip />
      </div>
      <Corner>
        <PlainButton aria-label="Поиск"><Pic w={14} h={14}><circle cx="8.500" cy="5" r="4" stroke="#3d66b8" strokeWidth="1.500" /><path d="M5.500 8L1 13" stroke="#3d66b8" strokeWidth="2" /></Pic></PlainButton>
        <PlainButton aria-label="Чат"><Pic w={20} h={16}><path d="M8 6c0-5 11-5 11 0 0 2-1 3-2 4v3l-3-2c-1 0-3 0-4-1" fill="#fff" stroke="#777" /><path d="M1 8c0-4 10-4 10 0s-4 4-6 4l-3 2 .5-3C1 10 1 9 1 8z" fill="#fff" stroke="#777" /></Pic></PlainButton>
      </Corner>
    </Toolbars>
    <Documents>
      <ChartWindow title="GBPUSD,M1"><M1Chart /></ChartWindow>
      <ChartWindow title="GBPUSD,M5" active><M5Chart /></ChartWindow>
    </Documents>
    <TabStrip>
      <Tab>GBPUSD,M1</Tab>
      <Tab $active>GBPUSD,M5</Tab>
      <TabArrows>
        <ArrowButton aria-label="Назад"><Pic w={4} h={8}><path d="M4 0v8L0 4z" fill="#8a8a8a" /></Pic></ArrowButton>
        <ArrowButton aria-label="Вперёд"><Pic w={4} h={8}><path d="M0 0v8l4-4z" fill="#8a8a8a" /></Pic></ArrowButton>
      </TabArrows>
    </TabStrip>
    <StatusBar>
      <StatusCell>Для вызова справки нажмите F1</StatusCell>
      <StatusCell $w={116}>Default</StatusCell>
      <StatusCell $w={102} />
      <StatusCell $w={71} />
      <StatusCell $w={71} />
      <StatusCell $w={68} />
      <StatusCell $w={70} />
      <StatusCell $w={66} />
      <StatusCell $w={130}>
        <svg width="23" height="13" shapeRendering="crispEdges" aria-hidden="true">
          {[0, 1, 2, 3, 4, 5, 6, 7].map((i) => (
            <g key={i}>
              <rect x={i * 3} y="0" width="2" height={9 - i} fill="#5a7a10" />
              <rect x={i * 3} y={10 - i} width="2" height={3 + i} fill="#a01a10" />
            </g>
          ))}
        </svg>
        4122/23 kb
      </StatusCell>
    </StatusBar>
    <Taskbar>
      <TaskGroup>
        <TaskButton aria-label="Пуск"><Pic w={16} h={16}><path d="M0 2.500L6.500 1.500V7.500H0zM7.500 1.300L16 0v7.500H7.500zM0 8.500h6.500v6L0 13.500zM7.500 8.500H16V16l-8.500-1.300z" fill="#fff" /></Pic></TaskButton>
        <TaskButton aria-label="Поиск в Windows"><Pic w={17} h={17}><circle cx="10.500" cy="6" r="5" stroke="#fff" strokeWidth="1.300" /><path d="M7 10L1 16" stroke="#fff" strokeWidth="1.300" /></Pic></TaskButton>
        <TaskButton aria-label="Представление задач"><Pic w={17} h={16}><path d="M.5 0v3.500h10V0M.5 16v-3.500h10V16M.5 5.500h10v5H.5zM14.500 0v16M13 3.500h3" stroke="#fff" /></Pic></TaskButton>
      </TaskGroup>
      <TaskGroup $gap={1} $inset={3}>
        <TaskButton aria-label="Edge"><Pic w={20} h={20}><path d="M0 9C2 2 6 0 10.500 0 17 0 20 5 20 9.500V12H6.500c.5 5 7 5 11.500 2.500V18C11 22 3 20 3 12.500 3 9 5 6 8 5 6.500 6.500 6.500 8 6.500 8.500h7C13.500 3 6 2 0 9z" fill="#1b86dc" /></Pic></TaskButton>
        <TaskButton $running aria-label="Проводник"><Pic w={22} h={18}><path d="M0 0h8l1.500 2H22v15H0z" fill="#f6cf62" /><path d="M1 4h21v13H1z" fill="#fbe394" /><path d="M4 18V12l2-2h10l2 2v6h-4v-4H8v4z" fill="#38a5e8" /></Pic></TaskButton>
        <TaskButton $running aria-label="Chrome">
          <Pic w={22} h={22}>
            <circle cx="11" cy="11" r="11" fill="#fbc02d" />
            <path d="M1.500 5.500A11 11 0 0 1 20.500 5.500H11a5.500 5.500 0 0 0-5 7.500z" fill="#db4437" />
            <path d="M1.500 5.500A11 11 0 0 0 10.500 22l4.800-8.200A5 5 0 0 1 6.300 13.800z" fill="#0f9d58" />
            <circle cx="11" cy="11" r="5" fill="#fff" />
            <circle cx="11" cy="11" r="4" fill="#4285f4" />
          </Pic>
        </TaskButton>
        <TaskButton $running $active aria-label="Терминал GBPUSD"><Pic w={24} h={24}><path d="M0 0h24v24H0z" fill="#fff" /><path d="M8 2.500l3-1M10 22.500l4-1" stroke="#e3c8d8" /></Pic></TaskButton>
        <TaskButton $running aria-label="Торговый терминал">
          <Pic w={24} h={24}>
            <path d="M0 0h24v24H0z" fill="#fff" />
            <path d="M5 1c6 1 12 4 16 12C16 7 10 5 6 5z" fill="#1d6c9c" />
            <path d="M6 9c6-2 11 0 15 5-5-3-9-3-15-3z" fill="#f0943a" />
            <path d="M6 13c6-1 11 0 17 4-6-2-11-2-18-1z" fill="#3b8bb8" />
            <path d="M4 1c1 8 1 14-3 21h3c3-7 3-13 0-21z" fill="#14506f" />
            <path d="M2 22c7-4 13-5 21-4-8 1-13 2-20 5z" fill="#14506f" />
          </Pic>
        </TaskButton>
      </TaskGroup>
      <Tray>
        <TrayButton aria-label="Скрытые значки"><Pic w={13} h={8}><path d="M.5 7l6-6 6 6" stroke="#fff" strokeWidth="1.300" /></Pic></TrayButton>
        <TrayButton aria-label="Питание"><Pic w={17} h={13}><path d="M6 3.500h9.500v8H4.500V8M15.500 6H17v3h-1.500M2 0v3M5 0v3M.5 3.500h5v2l-1 1.500h-3l-1-1.500zM3.500 7v3" stroke="#fff" /></Pic></TrayButton>
        <TrayButton aria-label="Сеть"><Pic w={14} h={14}><path d="M1 13C1 6 6 1 13 1M4 13c0-5 4-9 9-9M7 13c0-3 3-6 6-6M10 13c0-2 1-3 3-3" stroke="#d8d8d8" /><circle cx="12" cy="12.500" r="1" fill="#fff" /></Pic></TrayButton>
        <TrayButton aria-label="Громкость"><Pic w={17} h={14}><path d="M.5 4.500h3l4-4v13l-4-4h-3zM10 4.500c1 1 1 4 0 5M12 2.500c2.500 2 2.500 7 0 9M14 .5c4 3 4 10 0 13" stroke="#fff" /></Pic></TrayButton>
        <TrayButton $w={35} aria-label="Язык ввода">РУС</TrayButton>
        <Clock>18:11<br />08.02.2019</Clock>
        <TrayButton $w={49} aria-label="Уведомления">
          <Pic w={26} h={26}>
            <path d="M1 2h16v12H8l-4 4v-4H1z" fill="#fff" />
            <path d="M4 5.500h10M4 8.500h10M4 11.500h7" stroke="#1b1f22" />
            <circle cx="17" cy="17" r="8" fill="#34383b" stroke="#9a9c9d" />
            <text x="17" y="21" fontSize="11" textAnchor="middle" fill="#fff">1</text>
          </Pic>
        </TrayButton>
        <ShowDesktop aria-label="Показать рабочий стол" />
      </Tray>
    </Taskbar>
  </Shell>
);

export default App;
